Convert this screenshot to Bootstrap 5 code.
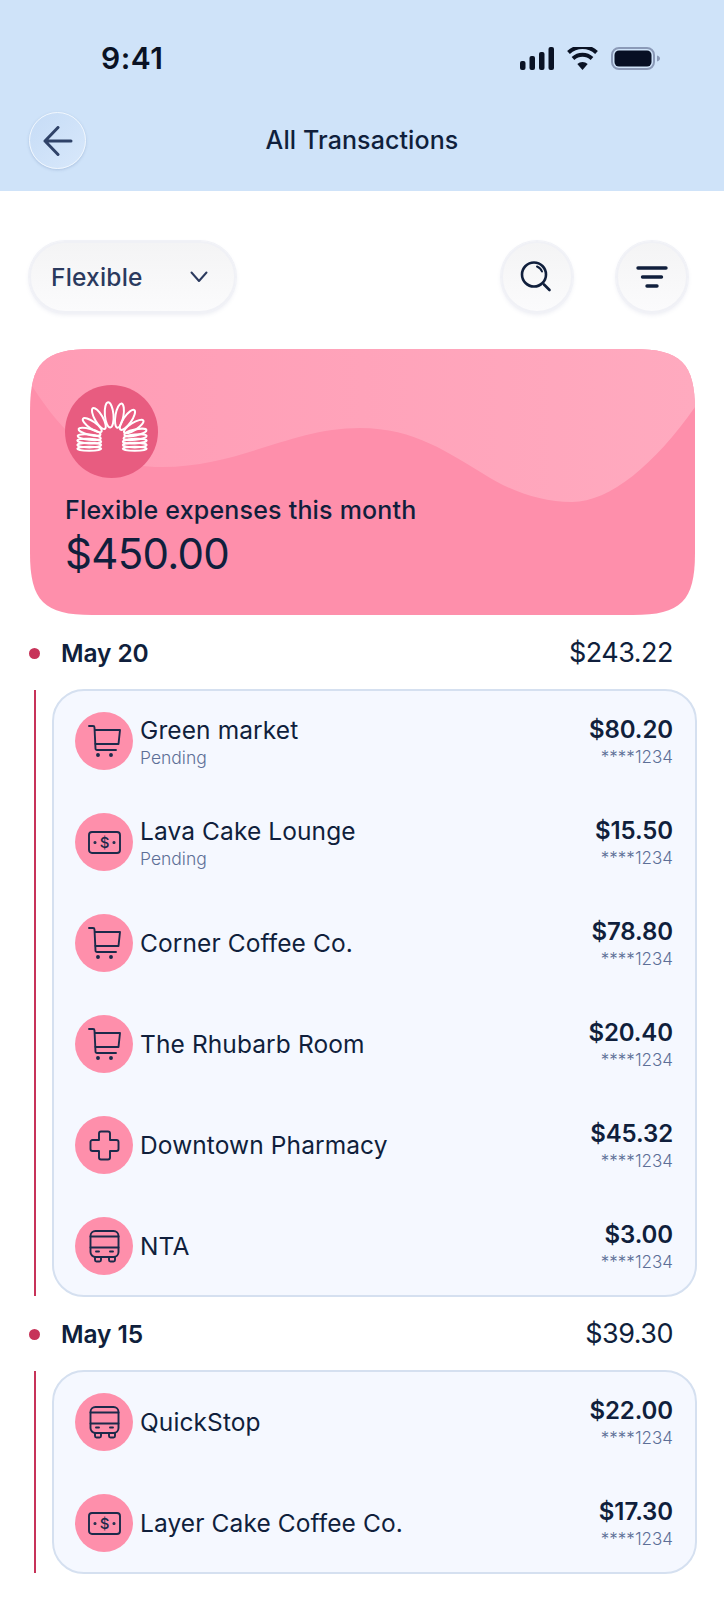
<!DOCTYPE html>
<html lang="en">
<head>
    <meta charset="UTF-8">
    <meta name="viewport" content="width=device-width, initial-scale=1.0">
    <title>All Transactions</title>
    <link href="https://cdn.jsdelivr.net/npm/bootstrap@5.3.0/dist/css/bootstrap.min.css" rel="stylesheet">
    <style>
        body { font-family: "Inter", "Noto Sans", sans-serif; color: #101f3c; background: #fff; width: 724px; }
        .top-head { height: 191px; background: #cfe3f9; padding: 47px 29px 0; }
        .status-row { height: 23px; padding: 0 35px 0 72px; }
        .clock { font-size: 30px; line-height: 23px; font-weight: 600; color: #0a1224; letter-spacing: .5px; }
        .title-row { margin-top: 42px; display: grid; grid-template-columns: 57px 1fr 57px; align-items: center; }
        .page-title { font-size: 25px; font-weight: 500; text-align: center; letter-spacing: .1px; }
        .back-btn { width: 57px; height: 57px; padding: 0; border: 1.5px solid #f1f7fe; background: linear-gradient(135deg, #c6dcf6, #d8e8fb); box-shadow: 0 1px 3px rgba(90,120,170,.3); }
        .back-btn:hover { background: #d8e8fb; border-color: #f1f7fe; }
        .main-col { padding: 50px 27px 26px 29px; }
        .tool-row { padding-right: 9px; gap: 43px; }
        .soft-btn { height: 72px; padding: 0; border: 2px solid #f0f1f6; background: linear-gradient(#f4f4f5, #fbfbfc); box-shadow: 0 0 0 1px #f1f2f7, 0 2px 4px rgba(120,130,170,.14); color: #2b3a5e; }
        .round-btn { width: 72px; }
        .kind-btn { width: 207px; padding: 0 26px 0 20px; font-size: 24.5px; font-weight: 500; letter-spacing: .2px; }
        .hero { height: 266px; margin: 36px 2px 1px 1px; background: #fe8fab; padding: 36px 35px; clip-path: path("M0 62C0 14 14 0 62 0H603C651 0 665 14 665 62V204C665 252 651 266 603 266H62C14 266 0 252 0 204Z"); }
        .hero-wave { position: absolute; left: 0; top: 0; }
        .coil { width: 93px; height: 93px; background: #e85c80; border-radius: 50%; }
        .hero-label { font-size: 25px; font-weight: 500; line-height: 30px; margin-top: 17px; letter-spacing: .2px; }
        .hero-sum { font-size: 42px; line-height: 52px; margin-top: 3px; letter-spacing: -.7px; }
        .day-row { height: 73px; padding: 2px 24px 0 0; }
        .day-dot { width: 11px; height: 11px; border-radius: 50%; background: #c73359; margin-right: 21px; }
        .day-name { font-size: 24.5px; font-weight: 600; letter-spacing: -.1px; }
        .day-sum { font-size: 27px; letter-spacing: -.5px; }
        .tl-line { width: 2px; margin: 1px 16px 1px 5px; background: #c73359; flex: none; }
        .tx-card { padding: 21px 22px 20px 21px; gap: 43px; border: 2px solid #d5e0f0; border-radius: 32px; background: #f5f8ff; }
        .tx-row { height: 58px; }
        .tx-icon { width: 58px; height: 58px; border-radius: 50%; background: #fe8fab; margin-right: 7px; }
        .tx-icon svg { fill: none; stroke: #1b2a4a; stroke-width: 1.9; stroke-linecap: round; stroke-linejoin: round; }
        .tx-name { font-size: 24.5px; line-height: 30px; letter-spacing: .1px; }
        .tx-sub { font-size: 17px; line-height: 22px; margin-top: 1px; color: #5d6f97; font-weight: 300; }
        .tx-note { padding-top: 2px; }
        .tx-note .tx-sub { margin-top: 2px; font-size: 17.5px; }
        .tx-sum { font-size: 24px; line-height: 30px; font-weight: 600; letter-spacing: -.1px; }
    </style>
</head>
<body>
    <header class="top-head">
        <div class="status-row d-flex justify-content-between align-items-center">
            <span class="clock">9:41</span>
            <svg width="140" height="23" viewBox="0 0 140 23">
                <g fill="#0a1224">
                    <rect x="0" y="14" width="5.5" height="9" rx="2"/>
                    <rect x="9.5" y="9" width="5.5" height="14" rx="2"/>
                    <rect x="19" y="5" width="5.5" height="18" rx="2"/>
                    <rect x="28.5" y="0" width="5.5" height="23" rx="2"/>
                    <path d="M62.5 23l-5.200-6a8 8 0 0 1 10.400 0z"/>
                </g>
                <g fill="none" stroke="#0a1224" stroke-width="4">
                    <path d="M53 11.500a14 14 0 0 1 19 0"/>
                    <path d="M48.500 5.500a20.500 20.500 0 0 1 28 0"/>
                </g>
                <rect x="92" y="1" width="42" height="21" rx="7" fill="none" stroke="#8b9ab8" stroke-width="2"/>
                <rect x="94.5" y="3.5" width="37" height="16" rx="4.5" fill="#070f24"/>
                <path d="M137 8.500c2 .6 3 1.600 3 3s-1 2.400-3 3z" fill="#8b9ab8"/>
            </svg>
        </div>
        <div class="title-row">
            <button class="btn back-btn rounded-circle d-flex align-items-center justify-content-center" aria-label="Back">
                <svg width="30" height="30" viewBox="0 0 30 30" fill="none" stroke="#2f4268" stroke-width="3" stroke-linecap="round" stroke-linejoin="round"><path d="M2 15h26M15 1.500 2 15l13 13.500"/></svg>
            </button>
            <div class="page-title">All Transactions</div>
            <div></div>
        </div>
    </header>

    <main class="main-col">
        <div class="tool-row d-flex align-items-center">
            <button class="btn soft-btn kind-btn rounded-pill d-flex justify-content-between align-items-center">
                <span>Flexible</span>
                <svg width="18" height="12" viewBox="0 0 18 12" fill="none" stroke="#2b3a5e" stroke-width="2" stroke-linecap="round" stroke-linejoin="round"><path d="M1.500 1.500 9 10l7.500-8.500"/></svg>
            </button>
            <button class="btn soft-btn round-btn rounded-circle d-flex align-items-center justify-content-center ms-auto" aria-label="Search">
                <svg width="36" height="36" viewBox="0 0 36 36" fill="none" stroke="#101f3c" stroke-width="2.600" stroke-linecap="round"><circle cx="15" cy="15.500" r="12"/><path d="M25 25.500l5.500 5.500"/><path d="M18 7.500a8.500 8.500 0 0 1 5 5" stroke-width="2"/></svg>
            </button>
            <button class="btn soft-btn round-btn rounded-circle d-flex align-items-center justify-content-center" aria-label="Filter">
                <svg width="32" height="24" viewBox="0 0 32 24" fill="none" stroke="#101f3c" stroke-width="3.400" stroke-linecap="round"><path d="M2 3h28M6.500 12h19M11 21h10"/></svg>
            </button>
        </div>

        <section class="hero position-relative">
            <svg class="hero-wave" width="665" height="266" viewBox="0 0 665 266">
                <defs><linearGradient id="waveFill" x1="0" x2="1" y1="0" y2="0"><stop offset="0" stop-color="#ff9cb5"/><stop offset="1" stop-color="#ffaabf"/></linearGradient></defs>
                <path fill="url(#waveFill)" d="M0 34C30 80 60 118 132 118C210 118 260 79 330 79C385 79 420 105 452 124C480 142 510 153 542 153C580 153 625 115 665 58V0H0Z"/>
            </svg>
            <div class="position-relative">
                <div class="coil">
                    <svg width="93" height="93" viewBox="45 45 280 280" fill="none" stroke="#fff" stroke-width="6">
                        <ellipse cx="118" cy="237" rx="36" ry="6"/>
                        <ellipse cx="118" cy="226" rx="36" ry="7"/>
                        <ellipse cx="118" cy="214" rx="36" ry="7" transform="rotate(3 118 214)"/>
                        <ellipse cx="118" cy="202" rx="35" ry="8" transform="rotate(6 118 202)"/>
                        <ellipse cx="119" cy="186" rx="34" ry="9" transform="rotate(14 119 186)"/>
                        <ellipse cx="127" cy="166" rx="34" ry="11" transform="rotate(35 127 166)"/>
                        <ellipse cx="147" cy="146" rx="36" ry="12" transform="rotate(60 147 146)"/>
                        <ellipse cx="178" cy="135" rx="38" ry="13" transform="rotate(85 178 135)"/>
                        <ellipse cx="209" cy="137" rx="37" ry="12" transform="rotate(100 209 137)"/>
                        <ellipse cx="233" cy="150" rx="36" ry="12" transform="rotate(125 233 150)"/>
                        <ellipse cx="252" cy="170" rx="34" ry="11" transform="rotate(148 252 170)"/>
                        <ellipse cx="257" cy="188" rx="34" ry="9" transform="rotate(168 257 188)"/>
                        <ellipse cx="256" cy="202" rx="35" ry="8" transform="rotate(174 256 202)"/>
                        <ellipse cx="255" cy="214" rx="36" ry="7" transform="rotate(177 255 214)"/>
                        <ellipse cx="255" cy="226" rx="36" ry="7"/>
                        <ellipse cx="255" cy="237" rx="36" ry="6"/>
                    </svg>
                </div>
                <div class="hero-label">Flexible expenses this month</div>
                <div class="hero-sum">$450.00</div>
            </div>
        </section>

        <div id="groups"></div>
    </main>

    <script>
        const icons = {
            cart: '<path d="M1 1h4a1.500 1.500 0 0 1 1.500 1.500L7.500 23.500a1.500 1.500 0 0 0 1.500 1.500h19M6.500 5H32l-1.500 14H7"/><circle cx="10" cy="30" r="1" fill="#1b2a4a"/><circle cx="23" cy="30" r="1" fill="#1b2a4a"/>',
            bill: '<rect x="1" y="6" width="31" height="21" rx="3"/><circle cx="7" cy="16.500" r=".6" fill="#1b2a4a"/><circle cx="26" cy="16.500" r=".6" fill="#1b2a4a"/><text x="16.500" y="21.800" text-anchor="middle" font-size="15" font-weight="500" font-family="Inter" fill="#1b2a4a" stroke="none">$</text>',
            cross: '<path d="M11 4.500a2 2 0 0 1 2-2h7a2 2 0 0 1 2 2V11h6.500a2 2 0 0 1 2 2v7a2 2 0 0 1-2 2H22v6.500a2 2 0 0 1-2 2h-7a2 2 0 0 1-2-2V22H4.500a2 2 0 0 1-2-2v-7a2 2 0 0 1 2-2H11Z"/>',
            bus: '<rect x="2.500" y="1" width="28" height="26" rx="5"/><path d="M2.500 6.500h28M2.500 17.500h28M8 21.500h3M22 21.500h3M7 27v3a1.500 1.500 0 0 0 1.500 1.500h3A1.500 1.500 0 0 0 13 30v-3M21 27v3a1.500 1.500 0 0 0 1.500 1.500h3A1.500 1.500 0 0 0 27 30v-3"/>'
        };
        const groups = [
            { day: 'May 20', sum: '$243.22', rows: [
                ['cart', 'Green market', 'Pending', '$80.20'],
                ['bill', 'Lava Cake Lounge', 'Pending', '$15.50'],
                ['cart', 'Corner Coffee Co.', '', '$78.80'],
                ['cart', 'The Rhubarb Room', '', '$20.40'],
                ['cross', 'Downtown Pharmacy', '', '$45.32'],
                ['bus', 'NTA', '', '$3.00']
            ]},
            { day: 'May 15', sum: '$39.30', rows: [
                ['bus', 'QuickStop', '', '$22.00'],
                ['bill', 'Layer Cake Coffee Co.', '', '$17.30']
            ]}
        ];
        document.getElementById('groups').innerHTML = groups.map(g => `
            <div class="day-row d-flex align-items-center">
                <span class="day-dot"></span>
                <span class="day-name">${g.day}</span>
                <span class="day-sum ms-auto">${g.sum}</span>
            </div>
            <div class="d-flex">
                <div class="tl-line"></div>
                <div class="tx-card flex-grow-1 d-flex flex-column">
                    ${g.rows.map(r => `
                        <div class="tx-row d-flex align-items-center">
                            <div class="tx-icon d-flex align-items-center justify-content-center">
                                <svg width="33" height="33" viewBox="0 0 33 33">${icons[r[0]]}</svg>
                            </div>
                            <div class="flex-grow-1 ${r[2] ? 'tx-note' : ''}">
                                <div class="tx-name">${r[1]}</div>
                                ${r[2] ? `<div class="tx-sub">${r[2]}</div>` : ''}
                            </div>
                            <div class="text-end">
                                <div class="tx-sum">${r[3]}</div>
                                <div class="tx-sub">****1234</div>
                            </div>
                        </div>`).join('')}
                </div>
            </div>`).join('');
    </script>
    <script src="https://cdn.jsdelivr.net/npm/bootstrap@5.3.0/dist/js/bootstrap.bundle.min.js"></script>
</body>
</html>
